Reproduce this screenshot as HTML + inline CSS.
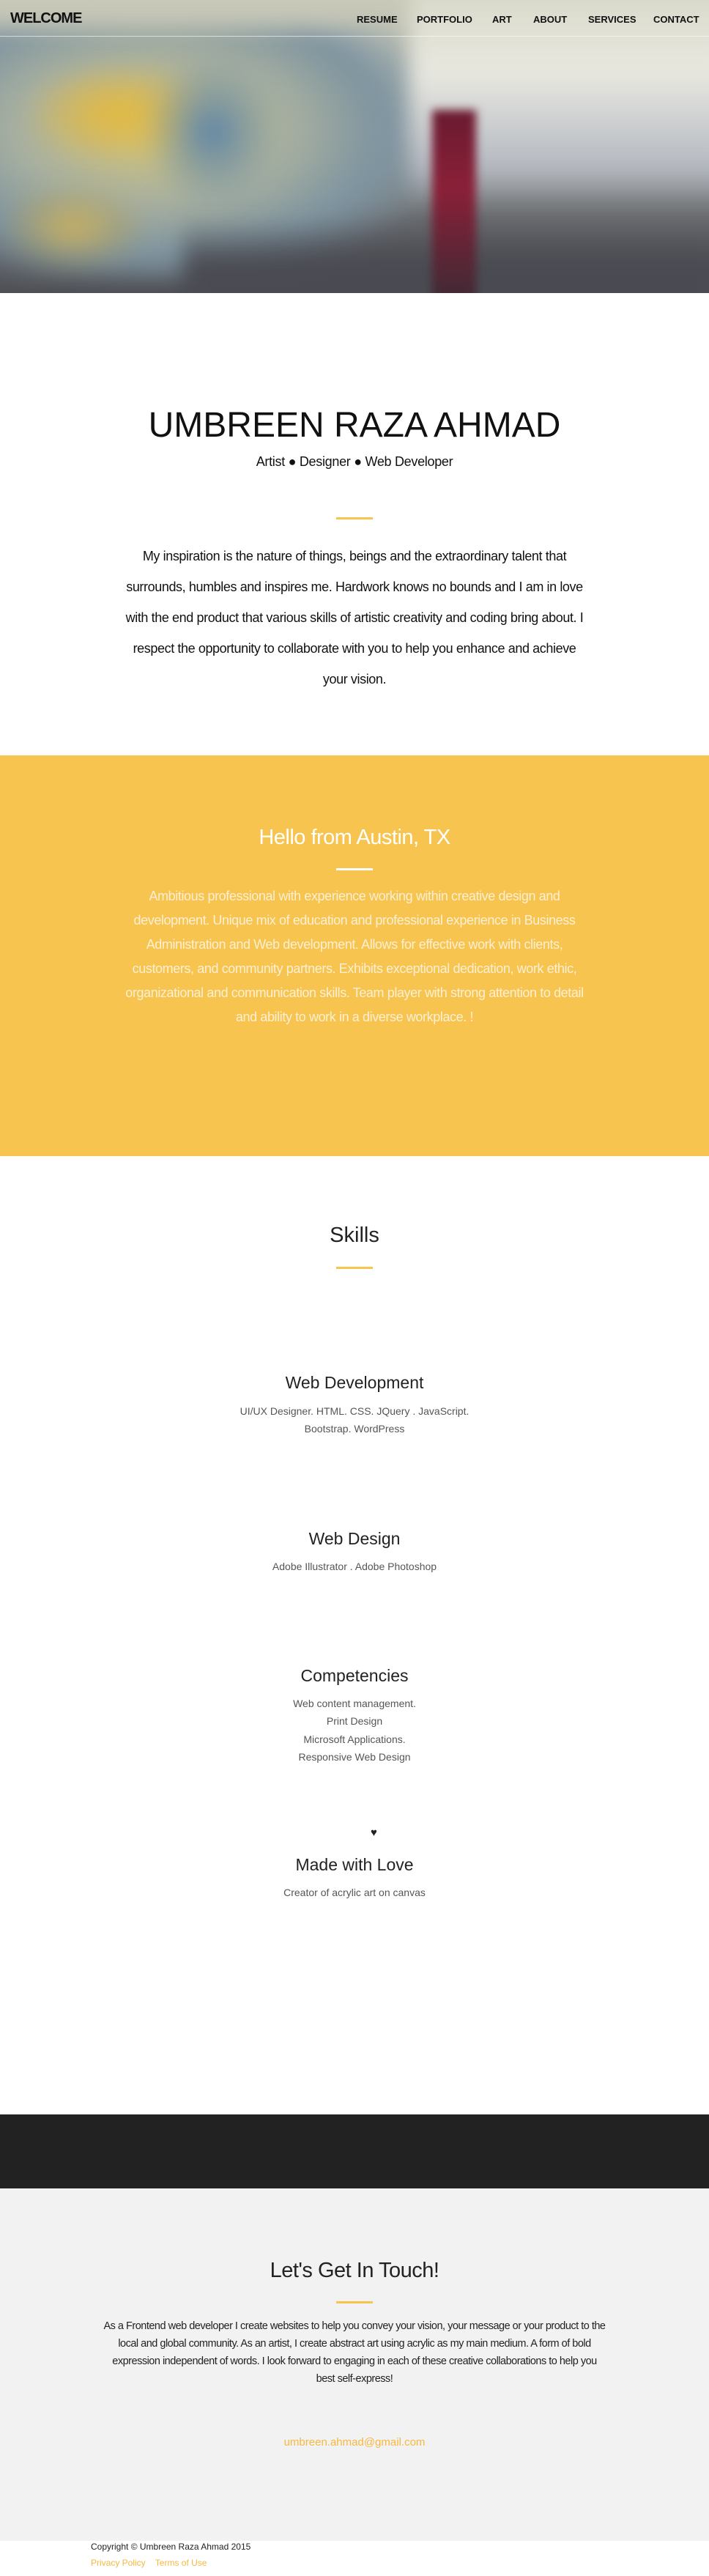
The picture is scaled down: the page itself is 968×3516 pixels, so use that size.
<!DOCTYPE html>
<html><head><meta charset="utf-8"><style>
*{margin:0;padding:0;box-sizing:border-box}
body{width:968px;height:3516px;position:relative;font-family:"Liberation Sans",sans-serif;background:#fff;overflow:hidden}
.a{position:absolute;left:0;width:968px;text-align:center;white-space:nowrap}
#hero{position:absolute;left:0;top:0;width:968px;height:400px;overflow:hidden;background:linear-gradient(180deg,#c9c9b8 0%,#a9b0b0 45%,#6a6c70 75%,#4e4f55 100%)}
#hero div.b{position:absolute;filter:blur(14px)}
.nav{position:absolute;top:19px;font-size:13px;font-weight:bold;color:#111}
</style></head><body>
<div id="hero">
<div class="b" style="left:-40px;top:40px;width:620px;height:340px;background:radial-gradient(ellipse at 40% 40%,#d8c878 0%,#a8b0a0 35%,#7d93a0 60%,transparent 80%)"></div>
<div class="b" style="left:40px;top:90px;width:240px;height:130px;background:radial-gradient(ellipse,#e3b93e 0%,rgba(220,180,70,.4) 50%,transparent 75%)"></div>
<div class="b" style="left:0;top:250px;width:200px;height:120px;background:radial-gradient(ellipse,#c9b060 0%,rgba(180,160,80,.3) 50%,transparent 75%)"></div>
<div class="b" style="left:200px;top:80px;width:180px;height:200px;background:radial-gradient(ellipse,#5d84a8 0%,rgba(90,130,170,.3) 50%,transparent 75%)"></div>
<div class="b" style="left:560px;top:-20px;width:440px;height:300px;background:linear-gradient(180deg,#d8d8c8,#e8e8e0 40%,#b8bcc4 80%,transparent)"></div>
<div class="b" style="left:250px;top:300px;width:740px;height:130px;background:linear-gradient(180deg,transparent,#4a4b52 50%)"></div>
<div class="b" style="left:590px;top:150px;width:60px;height:270px;background:linear-gradient(180deg,#6a1a30,#8a2038 40%,#3a2a34 100%);filter:blur(6px)"></div>
<div style="position:absolute;left:0;top:49px;width:968px;height:1px;background:rgba(255,255,255,.6)"></div>
</div>
<div class="nav" style="left:14px;top:14px;font-size:20px;letter-spacing:-1px">WELCOME</div>
<div class="nav" style="left:487px">RESUME</div>
<div class="nav" style="left:569px">PORTFOLIO</div>
<div class="nav" style="left:672px">ART</div>
<div class="nav" style="left:728px">ABOUT</div>
<div class="nav" style="left:803px">SERVICES</div>
<div class="nav" style="left:892px">CONTACT</div>

<div class="a" style="top:553px;font-size:48px;color:#111">UMBREEN RAZA AHMAD</div>
<div class="a" style="top:620px;font-size:18px;color:#111;letter-spacing:-0.3px">Artist ● Designer ● Web Developer</div>
<div style="position:absolute;left:459px;top:706px;width:50px;height:3px;background:#f7c450"></div>
<div class="a" style="top:738px;font-size:18px;line-height:42px;color:#111;letter-spacing:-0.4px">My inspiration is the nature of things, beings and the extraordinary talent that<br>surrounds, humbles and inspires me. Hardwork knows no bounds and I am in love<br>with the end product that various skills of artistic creativity and coding bring about. I<br>respect the opportunity to collaborate with you to help you enhance and achieve<br>your vision.</div>

<div style="position:absolute;left:0;top:1031px;width:968px;height:547px;background:#f7c450"></div>
<div class="a" style="top:1127px;font-size:29px;color:#fff;letter-spacing:-0.5px">Hello from Austin, TX</div>
<div style="position:absolute;left:459px;top:1185px;width:50px;height:3px;background:#fff"></div>
<div class="a" style="top:1207px;font-size:18px;line-height:33px;color:#fcefd2;letter-spacing:-0.4px">Ambitious professional with experience working within creative design and<br>development. Unique mix of education and professional experience in Business<br>Administration and Web development. Allows for effective work with clients,<br>customers, and community partners. Exhibits exceptional dedication, work ethic,<br>organizational and communication skills. Team player with strong attention to detail<br>and ability to work in a diverse workplace. !</div>

<div class="a" style="top:1670px;font-size:29px;color:#222">Skills</div>
<div style="position:absolute;left:459px;top:1729px;width:50px;height:3px;background:#f7c450"></div>
<div class="a" style="top:1874px;font-size:23px;color:#222">Web Development</div>
<div class="a" style="top:1914px;font-size:14px;line-height:24px;color:#555">UI/UX Designer. HTML. CSS. JQuery . JavaScript.<br>Bootstrap. WordPress</div>
<div class="a" style="top:2087px;font-size:23px;color:#222">Web Design</div>
<div class="a" style="top:2126px;font-size:14px;line-height:24px;color:#555">Adobe Illustrator . Adobe Photoshop</div>
<div class="a" style="top:2274px;font-size:23px;color:#222">Competencies</div>
<div class="a" style="top:2313px;font-size:14px;line-height:24.3px;color:#555">Web content management.<br>Print Design<br>Microsoft Applications.<br>Responsive Web Design</div>
<div style="position:absolute;left:506px;top:2493px;font-size:15px;color:#222">♥</div>
<div class="a" style="top:2532px;font-size:23px;color:#222">Made with Love</div>
<div class="a" style="top:2575px;font-size:14px;color:#555">Creator of acrylic art on canvas</div>

<div style="position:absolute;left:0;top:2886px;width:968px;height:101px;background:#222"></div>
<div style="position:absolute;left:0;top:2987px;width:968px;height:481px;background:#f2f2f2"></div>
<div class="a" style="top:3083px;font-size:29px;color:#222;letter-spacing:-0.5px">Let's Get In Touch!</div>
<div style="position:absolute;left:459px;top:3141px;width:50px;height:3px;background:#f7c450"></div>
<div class="a" style="top:3163px;font-size:14.5px;line-height:24px;color:#222;letter-spacing:-0.5px">As a Frontend web developer I create websites to help you convey your vision, your message or your product to the<br>local and global community. As an artist, I create abstract art using acrylic as my main medium. A form of bold<br>expression independent of words. I look forward to engaging in each of these creative collaborations to help you<br>best self-express!</div>
<div class="a" style="top:3325px;font-size:15px;color:#f7b840">umbreen.ahmad@gmail.com</div>
<div style="position:absolute;left:124px;top:3469px;font-size:12px;color:#222">Copyright © Umbreen Raza Ahmad 2015</div>
<div style="position:absolute;left:124px;top:3491px;font-size:12px;color:#f7b840">Privacy Policy &nbsp;&nbsp; Terms of Use</div>
</body></html>
